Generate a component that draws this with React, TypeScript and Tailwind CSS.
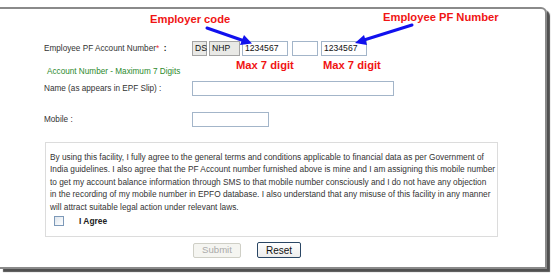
import React from "react";

const font = { fontFamily: '"Liberation Sans", Arial, sans-serif' };

function Field({ w, value = "", locked = false }: { w: string; value?: string; locked?: boolean }) {
  return (
    <div
      className={`${w} h-[15px] flex items-center px-[2px] text-[8.6px] text-[#111] border ${
        locked ? "bg-[#e9e9e6] border-[#a4a4a4]" : "bg-white border-[#a3b5c9]"
      }`}
    >
      {value}
    </div>
  );
}

function Arrows() {
  return (
    <svg className="absolute inset-0 pointer-events-none" width="554" height="274" viewBox="0 0 554 274">
      <line x1="207" y1="28" x2="243" y2="40.5" stroke="#1111ee" strokeWidth="3" strokeLinecap="round" />
      <polygon points="252,43.5 240,45 244,35" fill="#1111ee" />
      <line x1="412" y1="25" x2="364" y2="40" stroke="#1111ee" strokeWidth="3" strokeLinecap="round" />
      <polygon points="355,43 364,35 367,45" fill="#1111ee" />
    </svg>
  );
}

export default function App() {
  return (
    <div className="relative w-[554px] h-[274px] bg-white overflow-hidden" style={font}>
      <div className="pt-[7px]">
        <div className="w-[547px] h-[262px] border-t-2 border-r-2 border-b-2 border-[#8a8a8a] rounded-tr-[6px] shadow-[3px_3px_1px_0_#505050] text-[#333]">
          <div className="mt-[32px] flex items-center pl-[44px]">
            <div className="w-[148px] text-[8.2px] leading-[10px]">
              Employee PF Account Number<span className="text-[#e33]">*</span>
              <span className="font-bold text-[#111]">&nbsp; :</span>
            </div>
            <div className="flex">
              <Field w="w-[15px]" value="DS" locked />
              <div className="w-[2px]" />
              <Field w="w-[31px]" value="NHP" locked />
              <div className="w-[2px]" />
              <Field w="w-[46px]" value="1234567" />
              <div className="w-[4px]" />
              <Field w="w-[26px]" />
              <div className="w-[3px]" />
              <Field w="w-[46px]" value="1234567" />
            </div>
          </div>

          <div className="mt-[11px] pl-[47px] text-[8.2px] leading-[10px] text-[#2d8a2d]">
            Account Number - Maximum 7 Digits
          </div>

          <div className="mt-[4px] flex items-center pl-[44px]">
            <div className="w-[148px] text-[8.2px] leading-[10px]">Name (as appears in EPF Slip) :</div>
            <Field w="w-[202px]" />
          </div>

          <div className="mt-[16px] flex items-center pl-[44px]">
            <div className="w-[148px] text-[8.2px] leading-[10px]">Mobile :</div>
            <Field w="w-[77px]" />
          </div>

          <div className="mt-[15px] ml-[45px] w-[453px] h-[95px] border border-[#dcdcdc] pl-[4px] pt-[8px]">
            <p className="text-[8.3px] leading-[12.4px] text-[#333] whitespace-nowrap">
              By using this facility, I fully agree to the general terms and conditions applicable to financial data as per Government of
              <br />
              India guidelines. I also agree that the PF Account number furnished above is mine and I am assigning this mobile number
              <br />
              to get my account balance information through SMS to that mobile number consciously and I do not have any objection
              <br />
              in the recording of my mobile number in EPFO database. I also understand that any misuse of this facility in any manner
              <br />
              will attract suitable legal action under relevant laws.
            </p>
            <div className="mt-[2px] ml-[4px] flex items-center">
              <span className="w-[10px] h-[10px] border border-[#7d99b8] bg-gradient-to-br from-[#dfe6ee] to-white" />
              <span className="ml-[15px] text-[8.4px] font-bold text-[#222]">I Agree</span>
            </div>
          </div>

          <div className="mt-[5px] ml-[193px] flex items-center">
            <button className="w-[48px] h-[15px] border border-[#cfcfc6] bg-[#f5f5f1] text-[9.6px] text-[#aaa] rounded-[2px] flex items-center justify-center">
              Submit
            </button>
            <button className="ml-[16px] w-[44px] h-[16px] border border-[#2a4664] bg-gradient-to-b from-white to-[#ececec] text-[10px] text-[#111] rounded-[2px] flex items-center justify-center">
              Reset
            </button>
          </div>
        </div>
      </div>

      <Arrows />
      <div className="absolute left-[150px] top-[14px] text-[11.2px] font-bold text-[#f01414] leading-none">Employer code</div>
      <div className="absolute left-[383px] top-[12px] text-[11.2px] font-bold text-[#f01414] leading-none">Employee PF Number</div>
      <div className="absolute left-[236px] top-[60px] text-[11.2px] font-bold text-[#f01414] leading-none">Max 7 digit</div>
      <div className="absolute left-[323px] top-[60px] text-[11.2px] font-bold text-[#f01414] leading-none">Max 7 digit</div>
    </div>
  );
}
